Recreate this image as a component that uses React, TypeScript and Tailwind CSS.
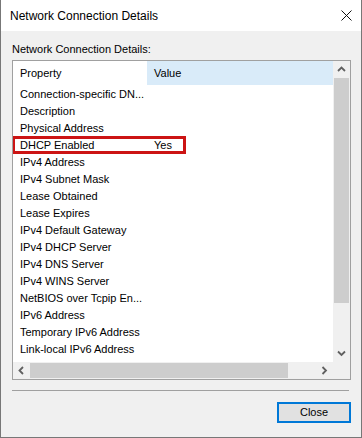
const rows = [
  ['Connection-specific DN...', ''],
  ['Description', ''],
  ['Physical Address', ''],
  ['DHCP Enabled', 'Yes'],
  ['IPv4 Address', ''],
  ['IPv4 Subnet Mask', ''],
  ['Lease Obtained', ''],
  ['Lease Expires', ''],
  ['IPv4 Default Gateway', ''],
  ['IPv4 DHCP Server', ''],
  ['IPv4 DNS Server', ''],
  ['IPv4 WINS Server', ''],
  ['NetBIOS over Tcpip En...', ''],
  ['IPv6 Address', ''],
  ['Temporary IPv6 Address', ''],
  ['Link-local IPv6 Address', ''],
  ['IPv6 Default Gateway', ''],
];

function Chevron({ dir }: { dir: 'up' | 'down' | 'left' | 'right' }) {
  const d = {
    up: 'M1 5 L4.5 1.5 L8 5',
    down: 'M1 1.5 L4.5 5 L8 1.5',
    left: 'M5 1 L1.5 4.5 L5 8',
    right: 'M1.5 1 L5 4.5 L1.5 8',
  }[dir];
  const vertical = dir === 'up' || dir === 'down';
  return (
    <svg
      width={vertical ? 9 : 7}
      height={vertical ? 7 : 9}
      viewBox={vertical ? '0 0 9 7' : '0 0 7 9'}
      className="block"
    >
      <path d={d} fill="none" stroke="#606060" strokeWidth="1.8" />
    </svg>
  );
}

export default function App() {
  return (
    <div
      className="w-[362px] h-[438px] flex flex-col bg-[#f0f0f0] border-x border-b border-[#777777] text-black"
      style={{ fontFamily: '"Liberation Sans", Arial, sans-serif' }}
    >
      {/* Title bar */}
      <div className="h-[31px] bg-white flex items-center justify-between pl-[9px] pr-[9px] shrink-0">
        <span className="text-[12px] text-black">Network Connection Details</span>
        <svg width="11" height="11" viewBox="0 0 11 11">
          <path d="M0.5 0.5 L10.5 10.5 M10.5 0.5 L0.5 10.5" stroke="#111" strokeWidth="1" />
        </svg>
      </div>

      {/* Body */}
      <div className="flex flex-col px-[11px] pt-[12px] text-[11px]">
        <div className="h-[17px] leading-[13px]">Network Connection Details:</div>

        {/* List view */}
        <div className="w-[339px] h-[320px] border border-[#a0a0a0] bg-white flex flex-col">
          <div className="flex h-[301px]">
            <div className="w-[320px] h-[301px] overflow-hidden">
              <div className="flex h-[24px] items-center">
                <div className="w-[134px] h-full pl-[7px] flex items-center">Property</div>
                <div className="flex-1 h-full pl-[7px] flex items-center bg-[#d9ebf9]">Value</div>
              </div>
              {rows.map(([name, value]) => (
                <div key={name} className="relative flex h-[17px] pt-[2px] leading-[15px] whitespace-nowrap">
                  <div className="w-[134px] pl-[7px]">{name}</div>
                  <div className="pl-[7px]">{value}</div>
                  {name === 'DHCP Enabled' && (
                    <div className="absolute left-[-1px] top-0 w-[174px] h-[18px] border-[3px] border-[#cc1414]" />
                  )}
                </div>
              ))}
            </div>
            {/* Vertical scrollbar */}
            <div className="w-[17px] h-[301px] bg-[#f0f0f0] flex flex-col items-center">
              <div className="h-[17px] w-full flex items-center justify-center">
                <Chevron dir="up" />
              </div>
              <div className="w-[15px] h-[225px] bg-[#cdcdcd]" />
              <div className="flex-1" />
              <div className="h-[17px] w-full flex items-center justify-center">
                <Chevron dir="down" />
              </div>
            </div>
          </div>
          {/* Horizontal scrollbar */}
          <div className="flex h-[17px] bg-[#f0f0f0]">
            <div className="w-[320px] flex items-center">
              <div className="w-[17px] h-full flex items-center justify-center">
                <Chevron dir="left" />
              </div>
              <div className="w-[258px] h-[15px] bg-[#cdcdcd]" />
              <div className="flex-1" />
              <div className="w-[17px] h-full flex items-center justify-center">
                <Chevron dir="right" />
              </div>
            </div>
            <div className="w-[17px]" />
          </div>
        </div>

        {/* Separator */}
        <div className="mt-[10px] w-[337px] h-px bg-[#a0a0a0]" />

        {/* Buttons */}
        <div className="flex justify-end mt-[11px]">
          <button className="w-[74px] h-[21px] border-2 border-[#0078d7] bg-[#e1e1e1] text-[11px] leading-none flex items-center justify-center mr-[-1px]">
            Close
          </button>
        </div>
      </div>
    </div>
  );
}
